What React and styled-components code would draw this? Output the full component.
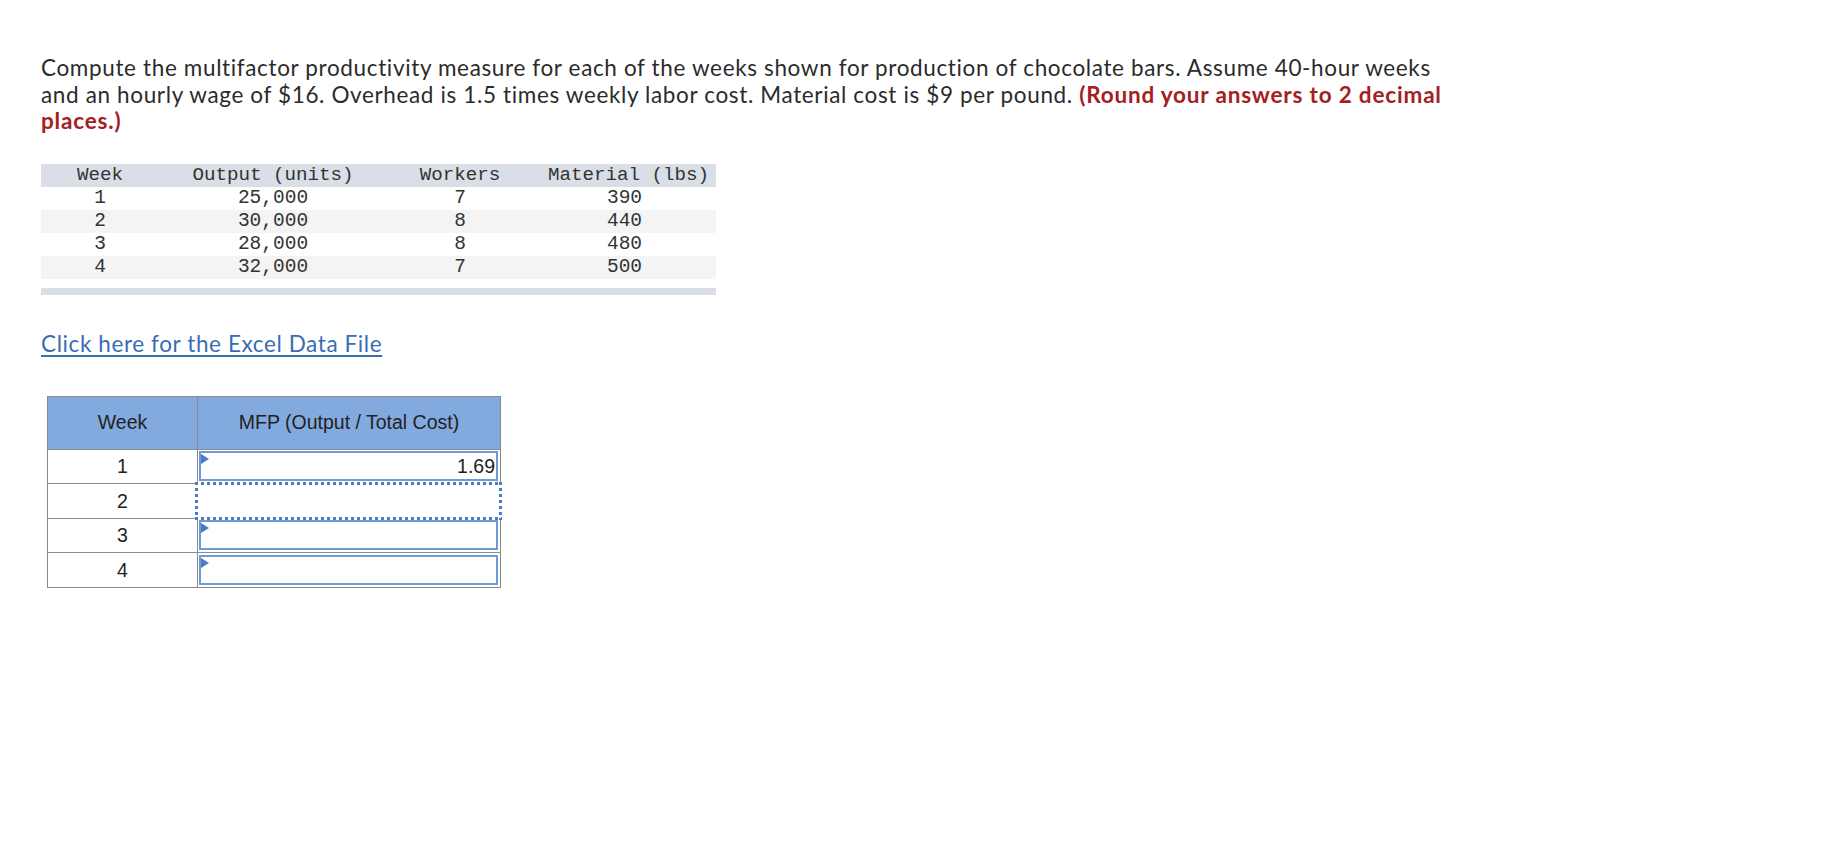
import React from "react";
import styled, { createGlobalStyle } from "styled-components";

const GlobalStyle = createGlobalStyle`
  html, body { margin: 0; padding: 0; background: #ffffff; }
  body { font-family: "Lato", "Open Sans", sans-serif; color: #2b2b2b; }
`;

const Page = styled.main`
  padding: 55px 0 0 41px;
`;

const Question = styled.p`
  margin: 0;
  font-family: "Lato", sans-serif;
  font-size: 22.5px;
  line-height: 26.7px;
  letter-spacing: 0.64px;
  color: #2b2b2b;
`;

const Emph = styled.strong`
  font-weight: 700;
  color: #a3201e;
  letter-spacing: 0.82px;
`;

const DataTable = styled.div`
  margin-top: 29px;
  width: 675px;
  display: flex;
  flex-direction: column;
`;

const DataRow = styled.div`
  display: grid;
  grid-template-columns: 118px 228px 146px 183px;
  height: 23px;
  align-items: center;
  background: ${(p) => (p.$head ? "#dadee6" : p.$shade ? "#f4f4f4" : "#ffffff")};
`;

const DataCell = styled.span`
  text-align: center;
  font-family: "Liberation Mono", "DejaVu Sans Mono", monospace;
  font-size: ${(p) => (p.$head ? 19.2 : 19.5)}px;
  line-height: 23px;
  color: #333333;
  white-space: pre;
  padding-left: ${(p) => p.$shift || 0}px;
`;

const BottomBar = styled.div`
  margin-top: 9px;
  height: 7px;
  background: #dadee6;
`;

const LinkRow = styled.div``;

const DataLink = styled.a`
  display: inline-block;
  margin-top: 36px;
  font-family: "Lato", sans-serif;
  font-size: 22.5px;
  line-height: 26.7px;
  letter-spacing: 0.6px;
  color: #3a6cb4;
  text-decoration: underline;
  text-decoration-thickness: 2px;
  text-underline-offset: 3px;
  cursor: pointer;
`;

const AnswerTable = styled.table`
  margin: 38px 0 0 6px;
  border-collapse: collapse;
  border: 1px solid #8a8a8a;
  font-family: "Liberation Sans", Arial, sans-serif;
  font-size: 19.5px;
  color: #222222;
`;

const HeadCell = styled.th`
  height: 52px;
  width: ${(p) => p.$w}px;
  padding: 0;
  background: #82aadf;
  border: 1px solid #8a8a8a;
  font-weight: 400;
  text-align: center;
  vertical-align: middle;
`;

const WeekCell = styled.td`
  height: 33.5px;
  padding: 0;
  border: 1px solid #8a8a8a;
  text-align: center;
  vertical-align: middle;
`;

const InputCell = styled.td`
  height: 33.5px;
  padding: 0;
  border: 1px solid #8a8a8a;
  position: relative;
`;

const InputBox = styled.div`
  position: relative;
  box-sizing: border-box;
  margin: 1px 2px 2px 1px;
  height: 30px;
  border: 2px solid #6f9ad8;
  background: #ffffff;
  display: flex;
  align-items: center;
  justify-content: flex-end;
  padding-right: 1px;
  font-family: "Liberation Sans", Arial, sans-serif;
  font-size: 19.5px;
  color: #222222;
`;

const Flag = styled.span`
  position: absolute;
  left: 0;
  top: 1px;
  width: 0;
  height: 0;
  border-top: 5px solid transparent;
  border-bottom: 5px solid transparent;
  border-left: 8px solid #4a7cc4;
`;

const FocusBox = styled.div`
  position: absolute;
  left: -3px;
  right: -2px;
  top: -2px;
  bottom: -2px;
  background:
    repeating-linear-gradient(90deg, #4a7cc4 0 3px, transparent 3px 6px) top left / 100% 3px no-repeat,
    repeating-linear-gradient(90deg, #4a7cc4 0 3px, transparent 3px 6px) bottom left / 100% 3px no-repeat,
    repeating-linear-gradient(180deg, #4a7cc4 0 3px, transparent 3px 6px) top left / 3px 100% no-repeat,
    repeating-linear-gradient(180deg, #4a7cc4 0 3px, transparent 3px 6px) top right / 3px 100% no-repeat,
    #ffffff;
`;

const rows = [
  ["1", "25,000", "7", "390"],
  ["2", "30,000", "8", "440"],
  ["3", "28,000", "8", "480"],
  ["4", "32,000", "7", "500"],
];

const answers = [
  { week: "1", value: "1.69" },
  { week: "2", focus: true },
  { week: "3", value: "" },
  { week: "4", value: "" },
];

export default function App() {
  return (
    <>
      <GlobalStyle />
      <Page>
        <Question>
          Compute the multifactor productivity measure for each of the weeks shown for production of chocolate bars. Assume 40-hour weeks
          <br />
          and an hourly wage of $16. Overhead is 1.5 times weekly labor cost. Material cost is $9 per pound.{" "}
          <Emph>
            (Round your answers to 2 decimal
            <br />
            places.)
          </Emph>
        </Question>

        <DataTable>
          <DataRow $head>
            <DataCell $head>Week</DataCell>
            <DataCell $head>Output (units)</DataCell>
            <DataCell $head>Workers</DataCell>
            <DataCell $head $shift={8}>Material (lbs)</DataCell>
          </DataRow>
          {rows.map((r, i) => (
            <DataRow key={r[0]} $shade={i % 2 === 1}>
              {r.map((c, j) => (
                <DataCell key={j}>{c}</DataCell>
              ))}
            </DataRow>
          ))}
          <BottomBar />
        </DataTable>

        <LinkRow>
          <DataLink>Click here for the Excel Data File</DataLink>
        </LinkRow>

        <AnswerTable>
          <thead>
            <tr>
              <HeadCell $w={149}>Week</HeadCell>
              <HeadCell $w={302}>MFP (Output / Total Cost)</HeadCell>
            </tr>
          </thead>
          <tbody>
            {answers.map((a) => (
              <tr key={a.week}>
                <WeekCell>{a.week}</WeekCell>
                <InputCell>
                  {a.focus ? (
                    <FocusBox />
                  ) : (
                    <InputBox>
                      <Flag />
                      {a.value}
                    </InputBox>
                  )}
                </InputCell>
              </tr>
            ))}
          </tbody>
        </AnswerTable>
      </Page>
    </>
  );
}
